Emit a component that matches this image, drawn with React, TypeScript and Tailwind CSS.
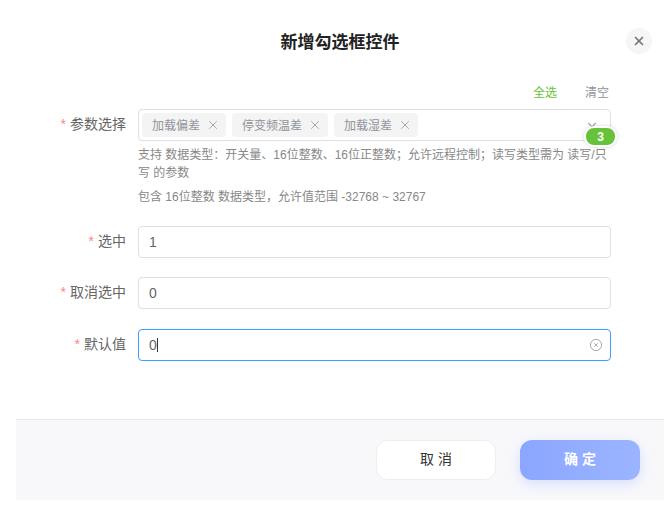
import { X, ChevronDown } from 'lucide-react'

const tags = ['加载偏差', '停变频温差', '加载湿差']

function Label({ text }: { text: string }) {
  return (
    <label className="w-[110px] shrink-0 mr-3 text-right text-[14px] leading-[30px] text-[#666]">
      <span className="text-[#f78989] mr-1">*</span>
      {text}
    </label>
  )
}

function Field({ label, value }: { label: string; value: string }) {
  return (
    <div className="flex">
      <Label text={label} />
      <input
        readOnly
        value={value}
        className="flex-1 min-w-0 h-8 px-[10px] text-[14px] text-[#666] bg-white border border-[#dcdfe6] rounded outline-none"
      />
    </div>
  )
}

export default function App() {
  return (
    <div className="w-[668px] h-[514px] bg-white overflow-hidden font-['Liberation_Sans','Noto_Sans_CJK_SC',sans-serif]">
      <div className="ml-4 w-[648px] h-[500px] flex flex-col">
        {/* Header */}
        <div className="relative h-[84px] pt-[2px] flex items-center justify-center">
          <h2 className="text-[17px] font-bold text-[#222]">新增勾选框控件</h2>
          <button className="absolute left-[610px] top-[28px] w-[26px] h-[26px] rounded-full bg-[#f6f6f6] flex items-center justify-center text-[#777]">
            <X size={14} strokeWidth={3} />
          </button>
        </div>

        {/* Form */}
        <div className="flex-1 pr-[53px]">
          <div className="ml-[122px] h-[25px] flex justify-end gap-7 text-[12px] leading-[18px]">
            <span className="text-[#67c23a]">全选</span>
            <span className="mr-[2px] text-[#909399]">清空</span>
          </div>

          <div className="flex">
            <Label text="参数选择" />
            <div className="flex-1 min-w-0">
              <div className="relative h-8 flex items-center gap-[6px] pl-[3px] bg-white border border-[#dcdfe6] rounded">
                {tags.map(t => (
                  <span key={t} className="h-6 flex items-center gap-[6px] pl-[10px] pr-[6px] rounded bg-[#f4f4f5] text-[12px] text-[#909399]">
                    <span className="relative top-[1px]">{t}</span>
                    <X size={14} strokeWidth={1.25} className="text-[#8a8d94]" />
                  </span>
                ))}
                <ChevronDown size={14} className="absolute right-[11px] top-[8px] text-[#aaa]" />
                <span className="absolute -right-[7px] top-[16px] w-[33px] h-[21px] flex items-center justify-center rounded-[10px] bg-[#67c23a] border-2 border-white shadow-[0_0_4px_rgba(0,0,0,0.15)] text-[12px] font-bold text-white">
                  3
                </span>
              </div>
              <p className="mt-[5px] text-[12px] leading-[18px] text-[#888]">
                支持 数据类型：开关量、16位整数、16位正整数；允许远程控制；读写类型需为 读写/只写 的参数
              </p>
              <p className="mt-[6px] text-[12px] leading-[18px] text-[#888]">
                包含 16位整数 数据类型，允许值范围 -32768 ~ 32767
              </p>
            </div>
          </div>

          <div className="mt-5 flex flex-col">
            <Field label="选中" value="1" />
            <div className="mt-[19px]">
              <Field label="取消选中" value="0" />
            </div>
            <div className="mt-5 flex">
              <Label text="默认值" />
              <div className="relative flex-1 min-w-0 h-8 flex items-center px-[10px] text-[14px] text-[#666] bg-white border border-[#409eff] rounded">
                <span>0</span>
                <span className="w-px h-[14px] bg-[#333]" />
                <svg viewBox="0 0 14 14" className="absolute right-[7px] top-[8px] w-[14px] h-[14px] text-[#aaa]" fill="none" stroke="currentColor">
                  <circle cx="7" cy="7" r="5.6" strokeWidth="1" />
                  <path d="M5.3 5.3l3.4 3.4M8.7 5.3l-3.4 3.4" strokeWidth="1" />
                </svg>
              </div>
            </div>
          </div>
        </div>

        {/* Footer */}
        <div className="h-[81px] shrink-0 flex items-center justify-end gap-6 pr-6 pb-[1px] bg-[#f8f8fb] border-t border-[#e8e8ec]">
          <button className="w-[120px] h-10 rounded-xl bg-white border border-[#eee] text-[14px] text-[#333]">取 消</button>
          <button className="w-[120px] h-10 rounded-xl bg-gradient-to-r from-[#8aa6ff] to-[#9cb4ff] shadow-[0_4px_12px_rgba(138,166,255,0.3)] text-[14px] font-bold text-white">确 定</button>
        </div>
      </div>
    </div>
  )
}
